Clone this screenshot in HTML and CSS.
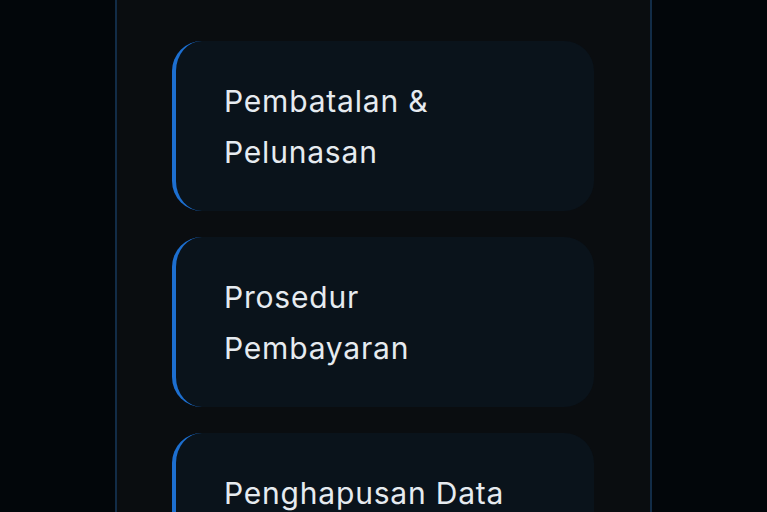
FILE: index.html
```html
<!DOCTYPE html>
<html lang="id">
<head>
<meta charset="utf-8">
<link rel="stylesheet" href="styles.css">
</head>
<body>
<main class="panel">
  <div class="card">Pembatalan &amp; Pelunasan</div>
  <div class="card">Prosedur Pembayaran</div>
  <div class="card">Penghapusan Data Pribadi</div>
</main>
</body>
</html>
```
FILE: styles.css
```css
html, body {
  margin: 0;
  padding: 0;
  background: #02060a;
  height: 100%;
  overflow: hidden;
}
body {
  font-family: Inter, "Noto Sans", sans-serif;
}
.panel {
  box-sizing: border-box;
  margin-left: 115px;
  width: 537px;
  min-height: 100%;
  background: #0a0d10;
  border-left: 2px solid #122c47;
  border-right: 2px solid #122c47;
  padding: 41px 56px 0 55px;
  display: flex;
  flex-direction: column;
  gap: 26px;
}
.card {
  box-sizing: border-box;
  height: 170px;
  background: #0a131b;
  border-left: 4px solid #1d6fd0;
  border-radius: 30px;
  padding: 35px 60px 0 48px;
  color: #e6ebf0;
  font-size: 30px;
  letter-spacing: 0.8px;
  line-height: 51px;
  flex-shrink: 0;
}
```
